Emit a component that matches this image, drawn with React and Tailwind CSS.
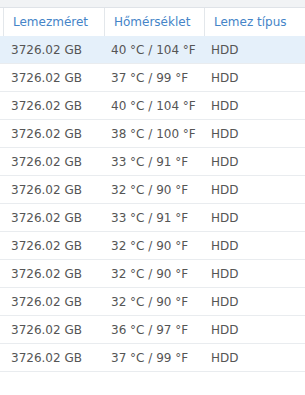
import React from 'react';

const rows = [
  { size: '3726.02 GB', temp: '40 °C / 104 °F', type: 'HDD' },
  { size: '3726.02 GB', temp: '37 °C / 99 °F', type: 'HDD' },
  { size: '3726.02 GB', temp: '40 °C / 104 °F', type: 'HDD' },
  { size: '3726.02 GB', temp: '38 °C / 100 °F', type: 'HDD' },
  { size: '3726.02 GB', temp: '33 °C / 91 °F', type: 'HDD' },
  { size: '3726.02 GB', temp: '32 °C / 90 °F', type: 'HDD' },
  { size: '3726.02 GB', temp: '33 °C / 91 °F', type: 'HDD' },
  { size: '3726.02 GB', temp: '32 °C / 90 °F', type: 'HDD' },
  { size: '3726.02 GB', temp: '32 °C / 90 °F', type: 'HDD' },
  { size: '3726.02 GB', temp: '32 °C / 90 °F', type: 'HDD' },
  { size: '3726.02 GB', temp: '36 °C / 97 °F', type: 'HDD' },
  { size: '3726.02 GB', temp: '37 °C / 99 °F', type: 'HDD' },
];

const App = () => {
  return (
    <div
      className="w-[305px] h-[395px] bg-white overflow-hidden text-[12px]"
      style={{ fontFamily: '"DejaVu Sans", Verdana, sans-serif' }}
    >
      <div className="h-[8px] bg-[#f1f3f5] border-b border-[#dfe3e8]" />

      {/* header */}
      <div className="grid grid-cols-[4px_101px_100px_1fr] h-[28px] items-stretch text-[#4584c8]">
        <div className="border-r border-[#e3e7eb]" />
        <div className="border-r border-[#e3e7eb] flex items-center pl-[9px]">Lemezméret</div>
        <div className="border-r border-[#e3e7eb] flex items-center pl-[9px]">Hőmérséklet</div>
        <div className="flex items-center pl-[9px]">Lemez típus</div>
      </div>

      {/* body */}
      {rows.map((row, i) => (
        <div
          key={i}
          className={
            'grid grid-cols-[4px_101px_100px_1fr] h-[28px] items-center border-b border-[#e9ecef] text-[#555555] ' +
            (i === 0 ? 'bg-[#e5f0fa]' : 'bg-white')
          }
        >
          <div />
          <div className="pl-[7px]">{row.size}</div>
          <div className="pl-[6px] whitespace-nowrap">{row.temp}</div>
          <div className="pl-[6px]">{row.type}</div>
        </div>
      ))}
    </div>
  );
};

export default App;
